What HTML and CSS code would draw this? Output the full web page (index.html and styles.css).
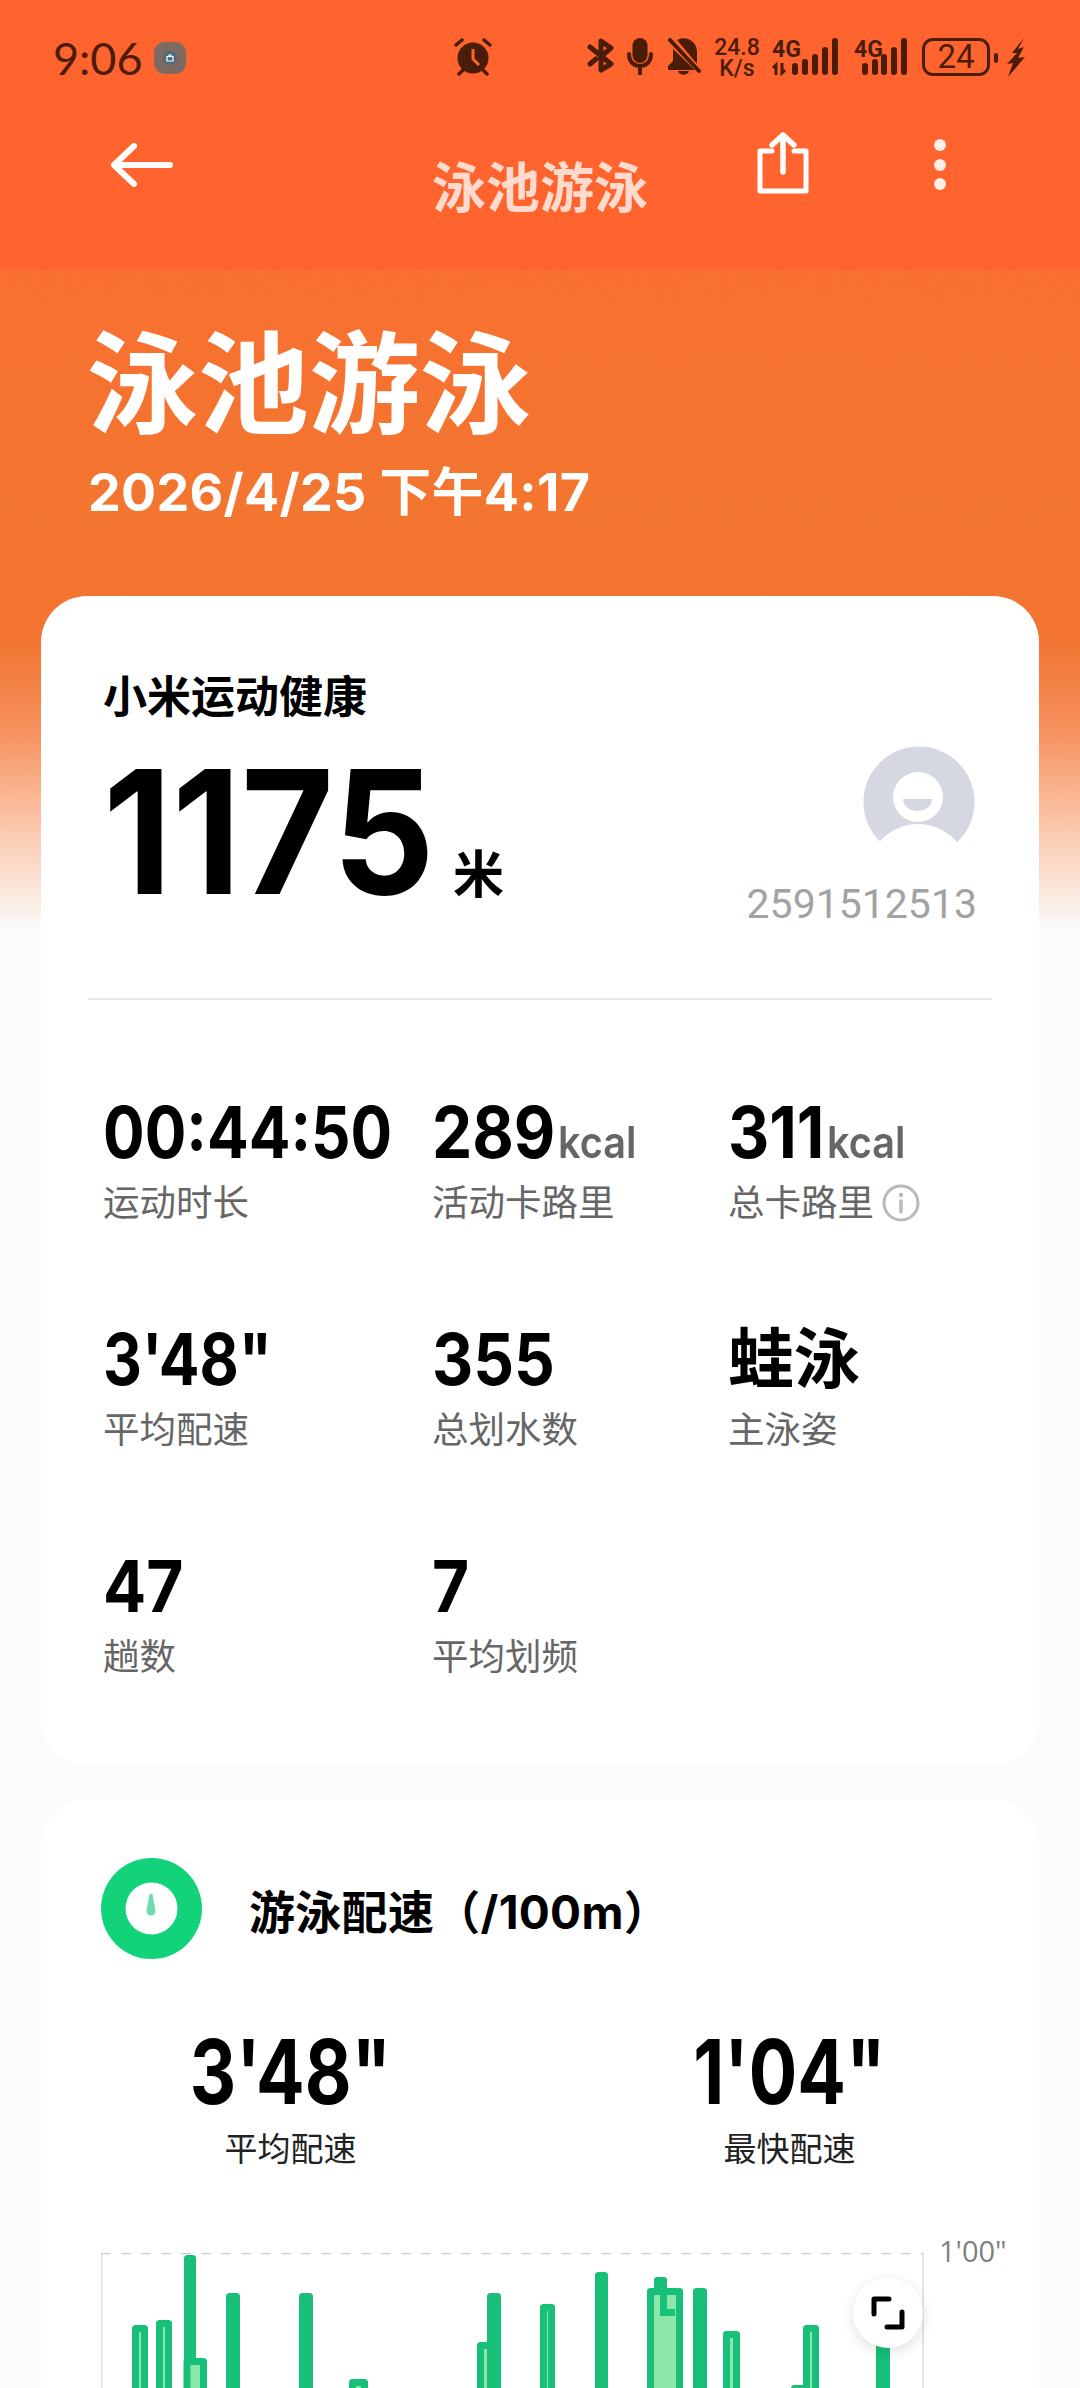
FILE: index.html
```html
<!DOCTYPE html>
<html lang="zh-CN">
<head>
    <meta charset="UTF-8">
    <meta name="viewport" content="width=device-width, initial-scale=1.0">
    <title>泳池游泳</title>
    <link rel="stylesheet" href="styles.css">
</head>
<body>
    <svg class="grain" width="1080" height="655">
        <filter id="grain-noise"><feTurbulence type="fractalNoise" baseFrequency="0.9" numOctaves="2"/><feColorMatrix type="saturate" values="0"/></filter>
        <rect width="1080" height="655" filter="url(#grain-noise)"/>
    </svg>

    <div class="topbar">
        <div class="status">
            <span class="time">9:06</span>
            <span class="app-badge"><svg width="14" height="14" viewBox="0 0 14 14"><circle cx="7" cy="7" r="7" fill="#4e6b7a"/><path d="M4 5.500h6v4.500H4zM6 5.500V4h2v1.500" fill="none" stroke="#fff" stroke-width="1.200"/></svg></span>
            <svg class="alarm" width="38" height="38" viewBox="0 0 38 38">
                <circle cx="19" cy="20" r="15.500" fill="#4b1c08"/>
                <path d="M19 11v10l6 6" fill="none" stroke="#ff642e" stroke-width="3"/>
                <path d="M2 7l6-5M36 7l-6-5M5 36l4-4M33 36l-4-4" stroke="#4b1c08" stroke-width="3.500" stroke-linecap="round"/>
            </svg>
            <div class="status-right">
                <svg class="ico-bt" width="27" height="35" viewBox="0 0 27 35">
                    <path d="M3 9l21 17-10 6V19M14 13V3l10 7-7 6M3 26l6-5" fill="none" stroke="#4b1c08" stroke-width="5" stroke-linejoin="round" stroke-linecap="round"/>
                </svg>
                <svg class="ico-mic" width="26" height="37" viewBox="0 0 26 37">
                    <rect x="5.500" y="0" width="15" height="25" rx="7.500" fill="#4b1c08"/>
                    <path d="M2 16c0 8 5 12 11 12s11-4 11-12M13 28v9" fill="none" stroke="#4b1c08" stroke-width="4" stroke-linecap="round"/>
                </svg>
                <svg class="ico-bell" width="33" height="37" viewBox="0 0 33 37">
                    <path d="M5 11l22 21H0v-4l5-5zM9 2c9-5 20 1 20 12v12z" fill="#4b1c08"/>
                    <path d="M10 33h11c-1 5-10 5-11 0z" fill="#4b1c08"/>
                    <path d="M2 2l29 31" stroke="#4b1c08" stroke-width="4" stroke-linecap="round"/>
                </svg>
                <div class="speed"><span>24.8</span><span>K/s</span></div>
                <svg class="signal signal-a" width="66" height="38" viewBox="0 0 66 38">
                    <text x="0" y="19" class="net">4G</text>
                    <path d="M4 37V27l-3 3M10 25v10l3-3" fill="none" stroke="#4b1c08" stroke-width="3"/>
                    <rect x="20" y="25" width="6" height="12" rx="3" fill="#4b1c08"/>
                    <rect x="30" y="21" width="6" height="16" rx="3" fill="#4b1c08"/>
                    <rect x="40" y="16" width="6" height="21" rx="3" fill="#4b1c08"/>
                    <rect x="50" y="9" width="6" height="28" rx="3" fill="#4b1c08"/>
                    <rect x="60" y="0" width="6" height="37" rx="3" fill="#4b1c08"/>
                </svg>
                <svg class="signal signal-b" width="53" height="38" viewBox="0 0 53 38">
                    <text x="0" y="19" class="net">4G</text>
                    <rect x="8" y="25" width="6" height="12" rx="3" fill="#4b1c08"/>
                    <rect x="18" y="21" width="6" height="16" rx="3" fill="#4b1c08"/>
                    <rect x="27" y="16" width="6" height="21" rx="3" fill="#4b1c08"/>
                    <rect x="37" y="9" width="6" height="28" rx="3" fill="#4b1c08"/>
                    <rect x="47" y="0" width="6" height="37" rx="3" fill="#4b1c08"/>
                </svg>
                <div class="battery"><span>24</span></div>
                <span class="battery-tip"></span>
                <svg class="ico-bolt" width="18" height="39" viewBox="0 0 18 39">
                    <path d="M17 0L5 15h5L0 26l6-1-5 14 17-20-7 1 6-11-6 2z" fill="#4b1c08"/>
                </svg>
            </div>
        </div>
        <div class="nav">
            <svg class="nav-back" width="63" height="44" viewBox="0 0 63 44">
                <path d="M60 22H4M24 3L4 22l20 19" fill="none" stroke="#fff" stroke-width="6" stroke-linecap="round" stroke-linejoin="round"/>
            </svg>
            <div class="nav-title">泳池游泳</div>
            <div class="nav-actions">
                <svg class="nav-share" width="52" height="62" viewBox="0 0 52 62">
                    <path d="M15 19H3v40h46V19H37" fill="none" stroke="#fff" stroke-width="5" stroke-linejoin="round" stroke-linecap="round"/>
                    <path d="M26 40V3M15 13L26 3l11 10" fill="none" stroke="#fff" stroke-width="5.500" stroke-linecap="round" stroke-linejoin="round"/>
                </svg>
                <svg class="nav-more" width="12" height="52" viewBox="0 0 12 52">
                    <circle cx="6" cy="6" r="6" fill="#ffeee7"/>
                    <circle cx="6" cy="26" r="6" fill="#ffeee7"/>
                    <circle cx="6" cy="45" r="6" fill="#ffeee7"/>
                </svg>
            </div>
        </div>
    </div>

    <div class="hero">
        <h1>泳池游泳</h1>
        <p>2026/4/25 下午4:17</p>
    </div>

    <div class="card card-summary">
        <div class="brand">小米运动健康</div>
        <div class="distance-row">
            <div class="distance"><span class="distance-num">1175</span><span class="distance-unit">米</span></div>
            <div class="user">
                <svg class="avatar" width="112" height="112" viewBox="0 0 112 112">
                    <circle cx="56" cy="56" r="55.500" fill="#d5d8e0"/>
                    <circle cx="55" cy="51" r="25" fill="#fff"/>
                    <path d="M40 53h29c0 16-29 16-29 0z" fill="#d5d8e0"/>
                    <circle cx="55" cy="129" r="51" fill="#fff"/>
                </svg>
                <div class="user-id">2591512513</div>
            </div>
        </div>
        <div class="divider"></div>
        <div class="stats">
            <div class="stat"><div class="stat-value stat-narrow">00:44:50</div><div class="stat-label">运动时长</div></div>
            <div class="stat"><div class="stat-value">289<small>kcal</small></div><div class="stat-label">活动卡路里</div></div>
            <div class="stat"><div class="stat-value">311<small>kcal</small></div><div class="stat-label">总卡路里
                <svg class="info" width="38" height="38" viewBox="0 0 38 38"><circle cx="19" cy="19" r="17" fill="none" stroke="#b9b9b9" stroke-width="3"/><path d="M19 17v11" stroke="#b9b9b9" stroke-width="3.500" stroke-linecap="round"/><circle cx="19" cy="11" r="2.200" fill="#b9b9b9"/></svg>
            </div></div>
            <div class="stat"><div class="stat-value stat-pace">3'48"</div><div class="stat-label">平均配速</div></div>
            <div class="stat"><div class="stat-value">355</div><div class="stat-label">总划水数</div></div>
            <div class="stat"><div class="stat-value stat-cjk">蛙泳</div><div class="stat-label">主泳姿</div></div>
            <div class="stat"><div class="stat-value">47</div><div class="stat-label">趟数</div></div>
            <div class="stat"><div class="stat-value">7</div><div class="stat-label">平均划频</div></div>
        </div>
    </div>

    <div class="card card-pace">
        <div class="pace-head">
            <svg class="pace-icon" width="101" height="101" viewBox="0 0 101 101">
                <circle cx="50.500" cy="50.500" r="50.500" fill="#12d27a"/>
                <circle cx="50.500" cy="50.500" r="26" fill="#fff"/>
                <path d="M48.500 36h3l3 17a4.500 4.500 0 1 1-9 0z" fill="#6fdcb0"/>
            </svg>
            <h2>游泳配速（/100m）</h2>
        </div>
        <div class="pace-stats">
            <div class="pace-stat"><div class="pace-value">3'48"</div><div class="pace-label">平均配速</div></div>
            <div class="pace-stat"><div class="pace-value">1'04"</div><div class="pace-label">最快配速</div></div>
        </div>
        <div class="chart">
            <svg class="chart-svg" width="823" height="160" viewBox="101 2253 823 160">
                <path class="axis" d="M101.500 2253v160M923 2253v160"/>
                <path class="axis-top" d="M101 2253.500h822"/>
                <g class="bars">
                    <rect x="135.500" y="2328.500" width="9" height="90"/>
                    <rect x="159.500" y="2323.500" width="9" height="90"/>
                    <rect x="187.500" y="2258.500" width="5" height="160"/>
                    <rect x="187" y="2361.500" width="16.500" height="60"/>
                    <rect x="229.500" y="2296.500" width="7" height="120"/>
                    <rect x="302.500" y="2296.500" width="7" height="120"/>
                    <rect x="352.500" y="2382.500" width="12" height="60"/>
                    <rect x="490.500" y="2296.500" width="7" height="120"/>
                    <rect x="480.500" y="2345.500" width="10" height="80"/>
                    <rect x="543.500" y="2307.500" width="8" height="120"/>
                    <rect x="598.500" y="2275.500" width="6" height="140"/>
                    <rect x="650.500" y="2291.500" width="29" height="120"/>
                    <rect x="696.500" y="2291.500" width="7" height="120"/>
                    <rect x="726.500" y="2334.500" width="10" height="80"/>
                    <rect x="794.500" y="2388.500" width="12" height="40"/>
                    <rect x="806.500" y="2328.500" width="9" height="90"/>
                    <rect x="879.500" y="2343.500" width="7" height="90"/>
                </g>
                <g class="bars-solid">
                    <rect x="654" y="2277" width="13" height="18" rx="3"/>
                    <rect x="660" y="2290" width="7" height="26"/>
                    <rect x="660" y="2309" width="15" height="7"/>
                </g>
            </svg>
            <span class="axis-label">1'00"</span>
            <button class="expand">
                <svg width="34" height="34" viewBox="0 0 34 34"><path d="M3 18V3h15M31 16v15H16" fill="none" stroke="#000" stroke-width="5" stroke-linecap="round" stroke-linejoin="round"/></svg>
            </button>
        </div>
    </div>
</body>
</html>
```

FILE: styles.css
```css
* {
    margin: 0;
    padding: 0;
    box-sizing: border-box;
}

html, body {
    height: 2388px;
    overflow: hidden;
}

body {
    font-family: Inter, "Noto Sans CJK SC", sans-serif;
    background: linear-gradient(180deg,
        #fb6d2c 270px,
        #f5732b 500px,
        #f4712b 640px,
        #f8905b 730px,
        #fbc9ae 830px,
        #fbf3ee 915px,
        #fbfbfb 925px);
    color: #000;
}

/* paper grain on the orange header */
.grain {
    position: absolute;
    top: 270px;
    left: 0;
    z-index: -1;
    opacity: 0.07;
    -webkit-mask-image: linear-gradient(180deg, #000 60%, transparent 100%);
    mask-image: linear-gradient(180deg, #000 60%, transparent 100%);
}

/* top bar */
.topbar {
    height: 270px;
    background: #ff642e;
}

.status {
    height: 110px;
    display: flex;
    padding: 38px 0 0 53px;
}

.time {
    font-family: Lato, sans-serif;
    font-size: 45px;
    line-height: 40px;
    color: #4b1c08;
}

.app-badge {
    width: 32px;
    height: 32px;
    margin: 4px 0 0 11px;
    border-radius: 11px;
    background: #7d6b62;
    display: flex;
    align-items: center;
    justify-content: center;
}

.alarm {
    margin-left: 268px;
}

.status-right {
    position: absolute;
    top: 38px;
    left: 587px;
    display: flex;
    align-items: flex-start;
}

.ico-mic { margin-left: 13px; }
.ico-bell { margin-left: 15px; }

.speed {
    width: 44px;
    margin-left: 14px;
    display: flex;
    flex-direction: column;
    align-items: center;
    gap: 2px;
    font-family: Roboto, sans-serif;
    font-size: 23px;
    font-weight: 500;
    line-height: 19px;
    color: #4b1c08;
}

.signal { overflow: visible; }
.signal-a { margin-left: 13px; }
.signal-b { margin-left: 16px; }

.net {
    font-family: Roboto, sans-serif;
    font-size: 23px;
    font-weight: 700;
    fill: #4b1c08;
}

.battery {
    width: 68px;
    height: 38px;
    margin-left: 15px;
    border: 3px solid #4b1c08;
    border-radius: 11px;
    display: flex;
    align-items: center;
    justify-content: center;
    font-family: Roboto, sans-serif;
    font-size: 33px;
    line-height: 32px;
    color: #4b1c08;
}

.battery-tip {
    width: 4px;
    height: 10px;
    margin: 15px 0 0 4px;
    border-radius: 2px;
    background: #4b1c08;
}

.ico-bolt { margin-left: 9px; }

.nav {
    height: 160px;
    display: grid;
    grid-template-columns: 1fr auto 1fr;
}

.nav-back {
    margin: 33px 0 0 110px;
}

.nav-title {
    margin-top: 49px;
    font-size: 54px;
    line-height: 60px;
    font-weight: 700;
    color: #ffdacd;
}

.nav-actions {
    display: flex;
    justify-content: flex-end;
    padding-right: 134px;
}

.nav-share { margin-top: 22px; }
.nav-more { margin: 29px 0 0 125px; }

/* hero */
.hero {
    padding: 55px 0 0 87px;
    color: #fff;
}

.hero h1 {
    font-size: 111px;
    line-height: 120px;
    font-weight: 700;
}

.hero p {
    margin: 18px 0 0 1px;
    font-size: 52px;
    line-height: 60px;
    font-weight: 700;
    letter-spacing: 0.3px;
}

/* cards */
.card {
    width: 998px;
    margin-left: 41px;
    background: #fff;
    border-radius: 46px;
}

.card-summary {
    margin-top: 73px;
    padding: 71px 62px 84px;
}

.brand {
    font-size: 44px;
    line-height: 60px;
    font-weight: 700;
}

.distance-row {
    display: flex;
    justify-content: space-between;
    height: 199px;
}

.distance {
    display: flex;
    align-items: flex-end;
}

.distance-num {
    margin-bottom: 6px;
    font-size: 172px;
    line-height: 178px;
    font-weight: 700;
    transform: scaleX(0.93);
    transform-origin: left center;
    width: 326px;
}

.distance-unit {
    margin: 0 0 21px 24px;
    font-size: 51px;
    line-height: 60px;
    font-weight: 700;
}

.user {
    width: 230px;
    margin-top: 19px;
    display: flex;
    flex-direction: column;
    align-items: flex-end;
}

.avatar {
    flex-shrink: 0;
    margin-right: 2px;
}

.user-id {
    flex-shrink: 0;
    margin-top: 21px;
    font-family: Roboto, sans-serif;
    font-size: 41px;
    line-height: 50px;
    color: #a2a2a2;
}

.divider {
    height: 2px;
    margin: 72px -15px 0;
    background: #e8e8e8;
}

.stats {
    margin-top: 92px;
    display: grid;
    grid-template-columns: 329px 296px 1fr;
    row-gap: 92px;
}

.stat {
    height: 135px;
}

.stat-value {
    height: 80px;
    font-size: 71px;
    line-height: 80px;
    font-weight: 700;
    white-space: nowrap;
    transform: scaleX(0.9);
    transform-origin: left center;
}

.stat-value small {
    margin-left: 3px;
    font-size: 44px;
    font-weight: 600;
    color: #666;
}

.stat-narrow {
    transform: scaleX(0.87);
}

.stat-pace {
    transform: scaleX(0.85);
}

.stat-cjk {
    font-size: 66px;
    transform: none;
}

.stat-label {
    margin-top: 6px;
    display: flex;
    align-items: center;
    gap: 8px;
    font-size: 36.5px;
    line-height: 50px;
    color: #666;
}

.card-pace {
    margin-top: 34px;
    padding-top: 59px;
    height: 700px;
}

.pace-head {
    display: flex;
    align-items: center;
    gap: 47px;
    padding-left: 60px;
}

.pace-head h2 {
    font-size: 46px;
    font-weight: 700;
    letter-spacing: 0.3px;
}

.pace-stats {
    margin-top: 63px;
    display: grid;
    grid-template-columns: 1fr 1fr;
    text-align: center;
}

.pace-value {
    font-size: 90px;
    line-height: 100px;
    font-weight: 700;
    transform: scaleX(0.8);
}

.pace-label {
    margin-top: 5px;
    font-size: 33px;
    line-height: 44px;
    color: #222;
}

/* chart */
.chart {
    position: relative;
    margin: 82px 0 0 60px;
}

.chart-svg {
    display: block;
}

.axis {
    fill: none;
    stroke: #ddd;
    stroke-width: 1.5;
}

.axis-top {
    fill: none;
    stroke: #ccc;
    stroke-width: 1.5;
    stroke-dasharray: 10 10;
}

.bars rect {
    fill: #8ae6a9;
    stroke: #18bf78;
    stroke-width: 7;
    stroke-linejoin: round;
}

.bars-solid rect {
    fill: #18bf78;
}

.axis-label {
    position: absolute;
    left: 838px;
    top: -20px;
    font-family: "Open Sans", sans-serif;
    font-size: 29px;
    line-height: 36px;
    color: #808080;
}

.expand {
    position: absolute;
    left: 752px;
    top: 25px;
    width: 70px;
    height: 70px;
    border: none;
    border-radius: 50%;
    background: #fff;
    box-shadow: 0 4px 14px rgba(0,0,0,0.12);
    display: flex;
    align-items: center;
    justify-content: center;
}

@media (max-width: 768px) {
    .card {
        margin-left: 20px;
    }
}
```
